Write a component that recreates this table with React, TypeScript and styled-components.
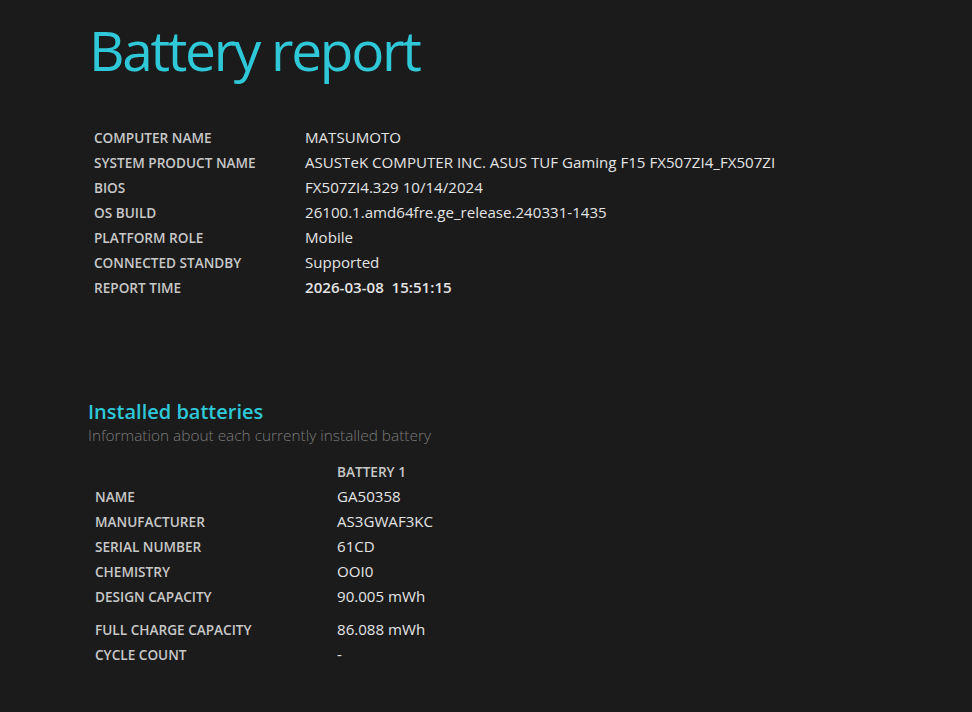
import React from "react";
import styled, { createGlobalStyle } from "styled-components";

const Global = createGlobalStyle`
  html, body { margin: 0; padding: 0; background: #1b1b1b; }
  body { font-family: "Open Sans", "Noto Sans", sans-serif; color: #e2e2e2; }
`;

const Page = styled.div`
  min-height: 712px;
  padding: 12px 0 0 88px;
  box-sizing: border-box;
  background: #1b1b1b;
`;

const Title = styled.h1`
  margin: 0 0 0 1px;
  font-size: 55px;
  font-weight: 400;
  color: #2ec8d8;
  letter-spacing: -2.3px;
  line-height: 76px;
`;

const Table = styled.div<{ $indent: number; $top: number }>`
  display: flex;
  flex-direction: column;
  margin-left: ${(p) => p.$indent}px;
  margin-top: ${(p) => p.$top}px;
`;

const Row = styled.div<{ $label: number; $gap?: boolean; $h?: number }>`
  display: grid;
  grid-template-columns: ${(p) => p.$label}px auto;
  align-items: baseline;
  align-content: center;
  height: ${(p) => p.$h ?? 25}px;
  margin-top: ${(p) => (p.$gap ? 8 : 0)}px;
`;

const Label = styled.div`
  font-size: 13.6px;
  font-weight: 600;
  color: #c8c8c8;
  text-transform: uppercase;
  white-space: nowrap;
`;

const Value = styled.div<{ $bold?: boolean }>`
  font-size: 15.1px;
  font-weight: ${(p) => (p.$bold ? 600 : 400)};
  color: #e4e4e4;
  white-space: nowrap;
`;

const Section = styled.section`
  margin-top: 101px;
`;

const SectionTitle = styled.h2`
  margin: 0;
  font-size: 20px;
  font-weight: 600;
  color: #2ec8d8;
  line-height: 24px;
`;

const Subtitle = styled.div`
  font-size: 15.4px;
  font-weight: 300;
  color: #7a7a7a;
  line-height: 24px;
`;

const sysRows: [string, string, boolean?][] = [
  ["Computer name", "MATSUMOTO"],
  ["System product name", "ASUSTeK COMPUTER INC. ASUS TUF Gaming F15 FX507ZI4_FX507ZI"],
  ["BIOS", "FX507ZI4.329 10/14/2024"],
  ["OS build", "26100.1.amd64fre.ge_release.240331-1435"],
  ["Platform role", "Mobile"],
  ["Connected standby", "Supported"],
  ["Report time", "2026-03-08\u00a0 15:51:15", true],
];

const batRows: [string, string, boolean?][] = [
  ["Name", "GA50358"],
  ["Manufacturer", "AS3GWAF3KC"],
  ["Serial number", "61CD"],
  ["Chemistry", "OOI0"],
  ["Design capacity", "90.005 mWh"],
  ["Full charge capacity", "86.088 mWh", true],
  ["Cycle count", "-"],
];

export default function App() {
  return (
    <>
      <Global />
      <Page>
        <Title>Battery report</Title>
        <Table $indent={6} $top={36}>
          {sysRows.map(([l, v, b]) => (
            <Row key={l} $label={211}>
              <Label>{l}</Label>
              <Value $bold={b}>{v}</Value>
            </Row>
          ))}
        </Table>
        <Section>
          <SectionTitle>Installed batteries</SectionTitle>
          <Subtitle>Information about each currently installed battery</Subtitle>
          <Table $indent={7} $top={12}>
            <Row $label={242} $h={23}>
              <div />
              <Label>Battery 1</Label>
            </Row>
            {batRows.map(([l, v, g]) => (
              <Row key={l} $label={242} $gap={g}>
                <Label>{l}</Label>
                <Value>{v}</Value>
              </Row>
            ))}
          </Table>
        </Section>
      </Page>
    </>
  );
}
